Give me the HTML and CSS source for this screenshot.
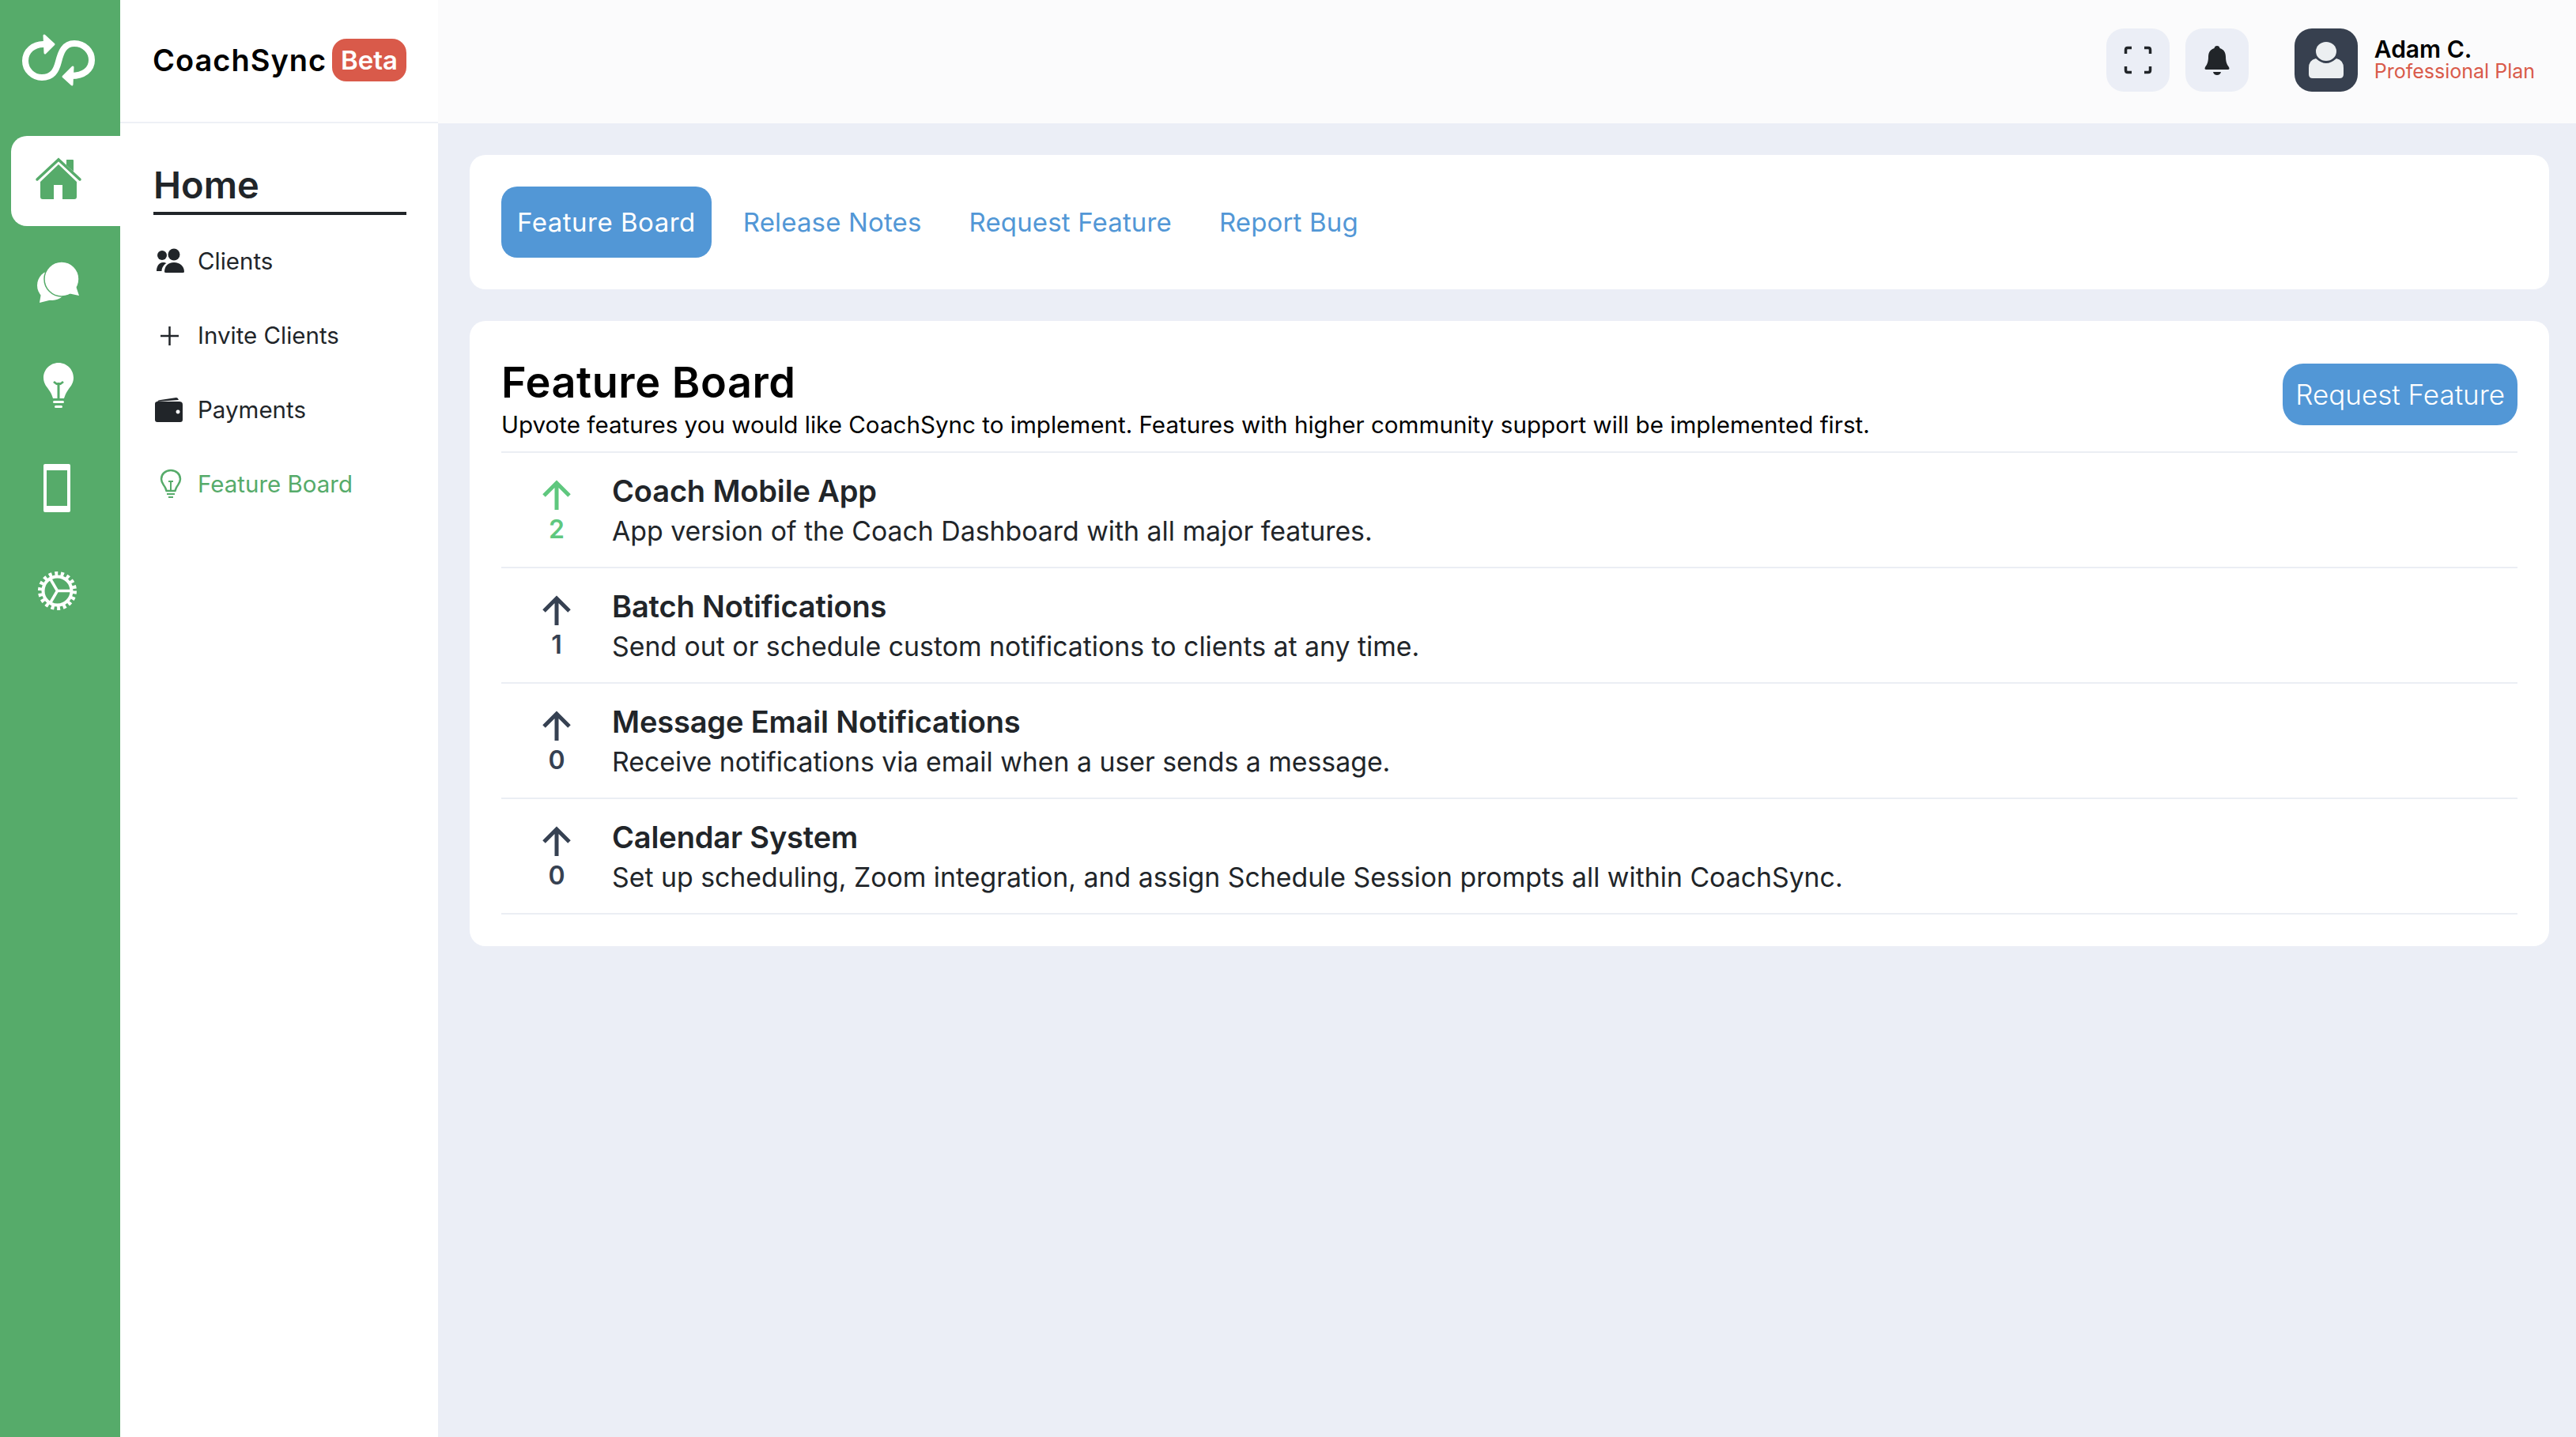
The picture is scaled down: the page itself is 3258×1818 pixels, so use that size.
FILE: index.html
```html
<!DOCTYPE html>
<html lang="en">
<head>
<meta charset="UTF-8">
<meta name="viewport" content="width=device-width, initial-scale=1.0">
<title>CoachSync - Feature Board</title>
<link rel="stylesheet" href="styles.css">
</head>
<body>
<div class="rail">
  <div class="rail-logo">
    <svg class="logo-icon" viewBox="24 40 100 72" width="100" height="72">
      <path d="M57 56C42 55 32 65 32 77C32 89 42 98 53 98C66 98 71 90 74 78C77 66 81 55 94 55C107 55 116 65 116 76C116 88 106 96 90 96" fill="none" stroke="#fff" stroke-width="8"/>
      <path d="M56 45L68 56L57 67Z M92 85L80 97L91 107Z" fill="#fff" stroke="#fff" stroke-width="3" stroke-linejoin="round"/>
    </svg>
  </div>
  <div class="rail-nav">
    <div class="rail-item active">
      <svg viewBox="0 0 60 60" width="60" height="60" fill="#56ab6a">
        <path d="M30 11L53 33V52Q53 55 50 55H35V37H24V55H10Q7 55 7 52V33Z"/>
        <path d="M40 5H48Q49 5 49 6V20L40 12Z"/>
        <path d="M3 30L30 5L57 30" fill="none" stroke="#56ab6a" stroke-width="3.5" stroke-linecap="round"/>
      </svg>
    </div>
    <div class="rail-item">
      <svg viewBox="0 0 60 60" width="60" height="60" fill="#fff">
        <circle cx="22" cy="34" r="19"/>
        <path d="M8 44L6 56L22 52Z"/>
        <circle cx="34" cy="26" r="22" stroke="#56ab6a" stroke-width="1.5"/>
        <path d="M42 44L56 47L51 32Z"/>
      </svg>
    </div>
    <div class="rail-item">
      <svg viewBox="0 0 60 60" width="60" height="60" fill="#fff">
        <path d="M30 2C19 2 11 11 11 21C11 29 16 33 19 38C21 41 22 44 23 47H37C38 44 39 41 41 38C44 33 49 29 49 21C49 11 41 2 30 2Z"/>
        <path d="M30 27V47" stroke="#56ab6a" stroke-width="3"/>
        <path d="M24 26Q27 29 30 29Q33 29 36 26" fill="none" stroke="#56ab6a" stroke-width="2.5"/>
        <rect x="23" y="50" width="14" height="3" rx="1.5"/>
        <rect x="25" y="56" width="10" height="3" rx="1.5"/>
      </svg>
    </div>
    <div class="rail-item">
      <svg viewBox="0 0 60 60" width="60" height="60" fill="#fff">
        <path fill-rule="evenodd" d="M13 0H43Q45 0 45 2V59Q45 61 43 61H13Q11 61 11 59V2Q11 0 13 0ZM15 8V53H41V8Z"/>
      </svg>
    </div>
    <div class="rail-item">
      <svg viewBox="0 0 60 60" width="60" height="60" fill="none" stroke="#fff">
        <circle cx="28.5" cy="30.5" r="18" stroke-width="4"/>
        <circle cx="28.5" cy="30.5" r="21.5" stroke-width="6" stroke-dasharray="3.9 3.6"/>
        <path d="M28.5 30.5H45M28.5 30.5L20 16M28.5 30.5L20 45" stroke-width="3.5"/>
      </svg>
    </div>
  </div>
</div>

<div class="sidebar">
  <div class="brand">
    <span class="brand-name">CoachSync</span>
    <span class="beta">Beta</span>
  </div>
  <div class="side-body">
    <h2 class="side-title">Home</h2>
    <ul class="side-nav">
      <li class="side-item">
        <svg viewBox="-1 -2 40 40" width="40" height="40" fill="#212529">
          <circle cx="10" cy="11" r="6"/>
          <circle cx="25" cy="10" r="7.5"/>
          <path d="M3 31C3 25 6 20 11 20C13 20 14.5 20.5 15.5 21C12 23 9.5 27 9.5 31Z"/>
          <path d="M13 32C13 25 17 20 25 20C33 20 38 25 38 32Q38 33 36 33H15Q13 33 13 32Z"/>
        </svg>
        Clients
      </li>
      <li class="side-item">
        <svg viewBox="-1 -1 40 40" width="40" height="40" fill="none" stroke="#212529" stroke-width="2.5">
          <path d="M19.5 8V32M8 20H31"/>
        </svg>
        Invite Clients
      </li>
      <li class="side-item">
        <svg viewBox="-1 -1 40 40" width="40" height="40" fill="#212529">
          <path d="M4 9Q5 7 8 7L28 4Q30 4 31 7Z"/>
          <path fill-rule="evenodd" d="M4 9H32Q36 9 36 13V32Q36 35 33 35H4Q1 35 1 32V12Q1 9 4 9ZM30 19.5A2.5 2.5 0 1 0 30.1 19.5Z"/>
        </svg>
        Payments
      </li>
      <li class="side-item green">
        <svg viewBox="-1 0 40 40" width="40" height="40" fill="none" stroke="#56ab6a">
          <path d="M21 3C14 3 9 8 9 14C9 19 12 21 14 25C15 27 15 28 15.5 29H26.5C27 28 27 27 28 25C30 21 33 19 33 14C33 8 28 3 21 3Z" stroke-width="2.5"/>
          <path d="M21 17V28M18 17H24" stroke-width="2"/>
          <path d="M16 33H26M18 37H24" stroke-width="2"/>
        </svg>
        Feature Board
      </li>
    </ul>
  </div>
</div>

<div class="main">
  <div class="topbar">
    <div class="top-btn">
      <svg viewBox="0 0 40 40" width="40" height="40" fill="none" stroke="#212529" stroke-width="3.5">
        <path d="M4.5 12V7Q4.5 4.5 7 4.5H12M28 4.5H33Q35.5 4.5 35.5 7V12M35.5 28V33Q35.5 35.5 33 35.5H28M12 35.5H7Q4.5 35.5 4.5 33V28"/>
      </svg>
    </div>
    <div class="top-btn">
      <svg viewBox="0 0 40 40" width="40" height="40" fill="#212529">
        <path d="M20 2Q23 2 23.5 5C29 6.5 31 11 31 16C31 23 33 26 35 29Q36.5 32 33.5 32H6.5Q3.5 32 5 29C7 26 9 23 9 16C9 11 11 6.5 16.5 5Q17 2 20 2Z"/>
        <path d="M15 35H25Q24 39 20 39Q16 39 15 35Z"/>
      </svg>
    </div>
    <div class="user">
      <div class="avatar">
        <svg viewBox="0 0 80 80" width="80" height="80" fill="#eceff1">
          <ellipse cx="40" cy="29" rx="13" ry="12"/>
          <path d="M27 38Q34 44 40 44Q46 44 53 38Q62 40 62 50V58Q62 63 57 63H23Q18 63 18 58V50Q18 40 27 38Z"/>
        </svg>
      </div>
      <div class="user-info">
        <div class="user-name">Adam C.</div>
        <div class="user-plan">Professional Plan</div>
      </div>
    </div>
  </div>

  <div class="content">
    <div class="card tabs">
      <a class="tab active">Feature Board</a>
      <a class="tab">Release Notes</a>
      <a class="tab">Request Feature</a>
      <a class="tab">Report Bug</a>
    </div>

    <div class="card board">
      <div class="board-head">
        <div class="board-text">
          <h1 class="board-title">Feature Board</h1>
          <p class="board-sub">Upvote features you would like CoachSync to implement. Features with higher community support will be implemented first.</p>
        </div>
        <button class="request-btn">Request Feature</button>
      </div>

      <div class="row">
        <div class="vote voted">
          <svg viewBox="0 0 36 38" width="36" height="38" fill="none" stroke="#5fc77e" stroke-width="5"><path d="M18 38V4M2 20L18 4L34 20"/></svg>
          <span class="vote-count">2</span>
        </div>
        <div class="row-text">
          <div class="row-title">Coach Mobile App</div>
          <div class="row-desc">App version of the Coach Dashboard with all major features.</div>
        </div>
      </div>
      <div class="row">
        <div class="vote">
          <svg viewBox="0 0 36 38" width="36" height="38" fill="none" stroke="#364152" stroke-width="5"><path d="M18 38V4M2 20L18 4L34 20"/></svg>
          <span class="vote-count">1</span>
        </div>
        <div class="row-text">
          <div class="row-title">Batch Notifications</div>
          <div class="row-desc">Send out or schedule custom notifications to clients at any time.</div>
        </div>
      </div>
      <div class="row">
        <div class="vote">
          <svg viewBox="0 0 36 38" width="36" height="38" fill="none" stroke="#364152" stroke-width="5"><path d="M18 38V4M2 20L18 4L34 20"/></svg>
          <span class="vote-count">0</span>
        </div>
        <div class="row-text">
          <div class="row-title">Message Email Notifications</div>
          <div class="row-desc">Receive notifications via email when a user sends a message.</div>
        </div>
      </div>
      <div class="row">
        <div class="vote">
          <svg viewBox="0 0 36 38" width="36" height="38" fill="none" stroke="#364152" stroke-width="5"><path d="M18 38V4M2 20L18 4L34 20"/></svg>
          <span class="vote-count">0</span>
        </div>
        <div class="row-text">
          <div class="row-title">Calendar System</div>
          <div class="row-desc">Set up scheduling, Zoom integration, and assign Schedule Session prompts all within CoachSync.</div>
        </div>
      </div>
    </div>
  </div>
</div>
</body>
</html>
```

FILE: styles.css
```css
* {
    box-sizing: border-box;
}
body {
    margin: 0;
    display: flex;
    height: 1818px;
    font-family: Inter, "Liberation Sans", sans-serif;
    color: #212529;
    background-color: #ebeef6;
    overflow: hidden;
}

/* green icon rail */
.rail {
    width: 152px;
    flex-shrink: 0;
    background-color: #56ab6a;
}
.rail-logo {
    height: 156px;
    padding: 0 4px 4px 0;
    display: flex;
    align-items: center;
    justify-content: center;
}
.rail-nav {
    padding-top: 8px;
    display: flex;
    flex-direction: column;
}
.rail-item {
    height: 114px;
    margin: 8px 0 8px 14px;
    padding: 0 0 4px 30px;
    display: flex;
    align-items: center;
    border-radius: 20px 0 0 20px;
}
.rail-item svg {
    overflow: visible;
}
.rail-item.active {
    background-color: #fff;
}

/* second sidebar */
.sidebar {
    width: 402px;
    flex-shrink: 0;
    background-color: #fff;
}
.brand {
    height: 156px;
    padding: 0 40px 2px 41px;
    display: flex;
    align-items: center;
    justify-content: space-between;
    border-bottom: 2px solid #eef0f6;
}
.brand-name {
    font-size: 38px;
    font-weight: 600;
    color: #000;
    letter-spacing: 1px;
}
.beta {
    width: 94px;
    height: 54px;
    display: flex;
    align-items: center;
    justify-content: center;
    border-radius: 18px;
    background-color: #d95a4a;
    color: #fff;
    font-size: 33px;
    font-weight: 600;
}
.side-body {
    padding: 0 40px 0 42px;
}
.side-title {
    margin: 0;
    height: 116px;
    padding-top: 50px;
    border-bottom: 4px solid #212529;
    font-size: 47px;
    line-height: 56px;
    font-weight: 600;
}
.side-nav {
    list-style: none;
    margin: 11px 0 0;
    padding: 0;
}
.side-item {
    height: 94px;
    display: flex;
    align-items: center;
    gap: 16px;
    font-size: 29.5px;
    font-weight: 400;
}
.side-item svg {
    overflow: visible;
}
.side-item.green {
    color: #56ab6a;
}

/* top bar and page content */
.main {
    flex: 1;
    min-width: 0;
}
.topbar {
    height: 156px;
    padding: 0 52px 4px 0;
    display: flex;
    align-items: center;
    justify-content: flex-end;
    gap: 20px;
    background-color: #fbfbfc;
}
.top-btn {
    width: 80px;
    height: 80px;
    display: flex;
    align-items: center;
    justify-content: center;
    border-radius: 22px;
    background-color: #ebeef6;
}
.user {
    margin-left: 38px;
    display: flex;
    align-items: center;
    gap: 21px;
}
.avatar {
    width: 80px;
    height: 80px;
    border-radius: 22px;
    background-color: #37404f;
}
.user-info {
    padding-bottom: 3px;
}
.user-name {
    font-size: 30px;
    line-height: 30px;
    font-weight: 600;
    color: #000;
}
.user-plan {
    font-size: 25px;
    line-height: 26px;
    color: #d95a4a;
}
.content {
    padding: 40px 34px 0 40px;
    display: flex;
    flex-direction: column;
    gap: 40px;
}
.card {
    background-color: #fff;
    border-radius: 20px;
    padding: 40px;
}
.tabs {
    display: flex;
    gap: 20px;
}
.tab {
    height: 90px;
    padding: 0 20px;
    display: flex;
    align-items: center;
    border-radius: 20px;
    font-size: 33px;
    letter-spacing: 0.15px;
    color: #5297d6;
}
.tab.active {
    background-color: #5297d6;
    color: #fff;
    letter-spacing: 0.5px;
}
.board-head {
    height: 127px;
    display: flex;
    justify-content: space-between;
    align-items: flex-start;
    border-bottom: 2px solid #ebeef4;
}
.board-text {
    padding-top: 6px;
}
.board-title {
    margin: 0;
    font-size: 54px;
    line-height: 64px;
    font-weight: 600;
    letter-spacing: 0.55px;
    color: #000;
}
.board-sub {
    margin: 1px 0 0;
    font-size: 29.6px;
    line-height: 40px;
    color: #000;
}
.request-btn {
    height: 78px;
    margin-top: 14px;
    padding: 0 16px;
    border: none;
    border-radius: 26px;
    background-color: #5297d6;
    color: #fff;
    font-family: inherit;
    font-size: 35px;
    font-weight: 300;
}
.row {
    height: 146px;
    display: flex;
    align-items: center;
    border-bottom: 2px solid #ebeef4;
}
.vote {
    width: 140px;
    flex-shrink: 0;
    padding-top: 4px;
    display: flex;
    flex-direction: column;
    align-items: center;
    gap: 7px;
    color: #364152;
}
.vote.voted {
    color: #5fc77e;
}
.vote-count {
    font-size: 32px;
    line-height: 36px;
    font-weight: 600;
}
.row-text {
    padding-top: 4px;
}
.row-title {
    font-size: 38px;
    line-height: 50px;
    font-weight: 600;
    letter-spacing: -0.15px;
}
.row-desc {
    font-size: 33.8px;
    line-height: 52px;
}
```
